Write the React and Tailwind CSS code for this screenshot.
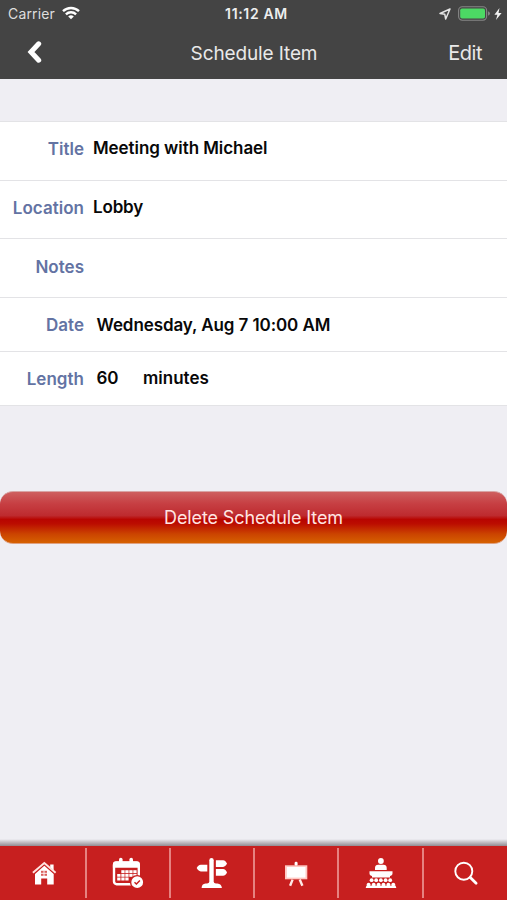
import React from "react";

function HomeIcon() {
  return (
    <svg width="32" height="32" viewBox="0 0 32 32" fill="#fff" className="ml-[2px]">
      <path d="M22.2 7.4h3.4v6.2l-3.4-3z" />
      <path d="M4.9 15.8 16.3 6l11.3 9.8" fill="none" stroke="#ffe3e0" strokeWidth="1.9" />
      <path d="M16.3 8.8 25.7 17v10.4h-6.5v-5.9h-6v5.9H7V17z" />
      <path d="M13 13.8h6v5h-6z" fill="#d9605c" />
      <path d="M16 13.6v5.4M12.8 16.3h6.4" stroke="#fff" strokeWidth="0.9" />
    </svg>
  );
}

function CalendarIcon() {
  const columns = [9.3, 13.3, 17.3, 21.3];
  return (
    <svg width="32" height="32" viewBox="0 0 32 32" fill="#fff">
      <rect x="2" y="5.6" width="24.8" height="21.6" rx="2.6" fill="none" stroke="#fff" strokeWidth="2.4" />
      <path d="M.9 10.8V7.3a3 3 0 0 1 3-3h21a3 3 0 0 1 3 3v3.5z" />
      <rect x="7" y=".7" width="3.6" height="5.5" rx="1.8" />
      <rect x="17.4" y=".7" width="3.6" height="5.5" rx="1.8" />
      {columns.map((x) => (
        <g key={x}>
          <rect x={x} y="13.2" width="3.3" height="2.9" />
          <rect x={x} y="16.9" width="3.3" height="2.9" />
        </g>
      ))}
      <path d="M5.2 16.9h3.3v2.9H5.2zM5.2 20.6h3.3v2.9H5.2zM9.3 20.6h3.3v2.9H9.3zM13.3 20.6h3.3v2.9h-3.3z" />
      <circle cx="25.2" cy="25.2" r="6.6" stroke="#c71f1f" strokeWidth="1.4" />
      <path d="m22.5 25.2 1.9 1.8 3.5-3.6" fill="none" stroke="#c71f1f" strokeWidth="1.4" />
    </svg>
  );
}

function SignpostIcon() {
  return (
    <svg width="32" height="32" viewBox="0 0 32 32" fill="#fff">
      <path d="M13.3 26V3.2a2.2 2.2 0 0 1 4.4 0V26z" />
      <path d="M5.6 31c.1-2.6 1.3-4.1 4-4.4 1.9-.2 3.3-.6 3.7-1.7h4.4c.4 1.1 1.8 1.5 3.7 1.7 2.7.3 4.3 1.8 4.5 4.4z" />
      <path d="M11.3 7.7v6.7H4.8C3 14.4 1.5 12.6.7 11 1.5 9.400 3 7.700 4.800 7.700z" />
      <path d="M19.9 3.2h7.2c1.7 0 3.2 1.8 3.9 3.4-.7 1.6-2.2 3.4-3.9 3.4h-7.2z" />
      <path d="M19.9 12h7.2c1.7 0 3.2 1.8 3.9 3.4-.7 1.6-2.2 3.4-3.9 3.4h-7.2z" />
    </svg>
  );
}

function EaselIcon() {
  return (
    <svg width="32" height="32" viewBox="0 0 32 32" fill="#fff">
      <rect x="14.6" y="4.8" width="3" height="4" rx="1.3" />
      <rect x="5" y="8.3" width="22.3" height="14" fill="#ffc9c4" />
      <rect x="6.8" y="10" width="18.7" height="10.6" />
      <path d="m12.6 22.6-2.5 6.2M19.7 22.6l2.7 6.2" stroke="#ffe9e6" strokeWidth="2.4" />
    </svg>
  );
}

function CakeIcon() {
  const scallops = [3.6, 8.7, 13.6, 18.5, 23.4, 28.3];
  const beads = [6.6, 11.2, 15.9, 20.6, 25.2];
  return (
    <svg width="32" height="32" viewBox="0 0 32 32" fill="#fff">
      <circle cx="15.9" cy="4" r="2.9" />
      <path d="M10 13v-2.1c0-2 1.3-3.2 3.2-3.2h5.3c1.9 0 3.2 1.2 3.2 3.2V13z" />
      <path d="M4.5 14.3h23v2.2c0 1.6-1.3 2.5-2.5 2.5v1.5H7V19c-1.2 0-2.5-.9-2.5-2.5z" />
      {beads.map((x) => (
        <circle key={x} cx={x} cy="23.2" r="1.9" />
      ))}
      {scallops.map((x) => (
        <circle key={x} cx={x} cy="27.6" r="1.9" />
      ))}
      <path d="M1.5 28.5h29l.8 2.500H.7z" />
    </svg>
  );
}

function SearchIcon() {
  return (
    <svg width="32" height="32" viewBox="0 0 32 32" fill="none" stroke="#fff">
      <circle cx="13.8" cy="14.2" r="8.5" strokeWidth="1.9" />
      <path d="m20.3 20.5 5.800 5.800" strokeWidth="2.8" strokeLinecap="round" />
    </svg>
  );
}

function StatusBar() {
  return (
    <div className="grid h-[27px] grid-cols-3 items-center pt-[1px] leading-none text-[#eeeeee]">
      <div className="flex items-center gap-[7px] pl-2">
        <span className="w-[47px] whitespace-nowrap text-[14px] tracking-[0.16px] text-[#dedede]">Carrier</span>
        <svg width="18" height="14" viewBox="0 0 18 14" className="-mt-[2px]" fill="none" stroke="#fff" strokeWidth="2.4">
          <path d="M1 5.2a11.6 11.6 0 0 1 16 0M3.9 8.3a7.4 7.4 0 0 1 10.2 0" />
          <path d="M9 13.3 6.2 10.5a4 4 0 0 1 5.6 0z" fill="#fff" stroke="none" />
        </svg>
      </div>
      <span className="whitespace-nowrap pb-[1px] pl-[6px] text-center text-[14px] font-semibold tracking-[0.65px]">11:12 AM</span>
      <div className="flex items-center justify-end pr-[5px]">
        <svg width="12" height="12" viewBox="0 0 12 12" className="mr-[7px]" fill="none" stroke="#e4e4e4" strokeWidth="1.5" strokeLinejoin="round">
          <path d="M11 1 1 5.5l4.8.8.9 4.7z" />
        </svg>
        <svg width="33" height="15" viewBox="0 0 33 15" className="-mt-[2px] mr-[3px]">
          <rect x=".6" y=".8" width="28" height="13.4" rx="3.6" fill="none" stroke="#858585" strokeWidth="1.1" />
          <rect x="2.2" y="2.4" width="24.8" height="10.2" rx="1.8" fill="#4cd964" />
          <path d="M30 5.2q2 .7 2 2.3t-2 2.3z" fill="#858585" />
        </svg>
        <svg width="8" height="12" viewBox="0 0 8 12" className="-mt-[1px]" fill="#f2f2f2">
          <path d="M5.5 0 .4 6.8h3L2 12l5.6-7H4.5z" />
        </svg>
      </div>
    </div>
  );
}

function Row({ label, height, children, gap }) {
  return (
    <div className={"flex items-center border-b border-[#e3e3e6] text-[17px] leading-none " + height}>
      <span className="w-[84px] shrink-0 whitespace-nowrap pt-[1px] text-right font-semibold tracking-[0.02px] text-[#6373a3]">{label}</span>
      <div className={"flex whitespace-nowrap font-semibold text-[#080808] " + gap}>{children}</div>
    </div>
  );
}

const tabs = [
  { name: "Home", Icon: HomeIcon },
  { name: "Schedule", Icon: CalendarIcon },
  { name: "Directions", Icon: SignpostIcon },
  { name: "Presentations", Icon: EaselIcon },
  { name: "Exhibits", Icon: CakeIcon },
  { name: "Search", Icon: SearchIcon },
];

export default function App() {
  return (
    <div className="flex h-[900px] w-[507px] flex-col overflow-hidden bg-[#efeef3] font-['Inter','Liberation_Sans',sans-serif]">
      <header className="h-[79px] shrink-0 bg-[#444444]">
        <StatusBar />
        <div className="grid h-[52px] grid-cols-[100px_1fr_100px] items-center text-[#e9e9e9]">
          <button className="pl-[26px]" aria-label="Back">
            <svg width="16" height="24" viewBox="0 0 16 24" className="-mt-[2px]" fill="none" stroke="#fff" strokeWidth="5">
              <path d="M12.7 3.8 5 12l7.7 8.2" strokeLinecap="round" strokeLinejoin="miter" />
            </svg>
          </button>
          <h1 className="whitespace-nowrap pl-[1px] text-center text-[19px] leading-none tracking-[-0.12px]">Schedule Item</h1>
          <button className="pr-[25px] text-right text-[20px] leading-none tracking-[-0.45px]">Edit</button>
        </div>
      </header>

      <main className="flex-1">
        <section className="mt-[42px] border-t border-[#e3e3e6] bg-white">
          <Row label="Title" height="h-[59px] pb-[5px]" gap="pl-[9px]"><span className="tracking-[-0.06px]">Meeting with Michael</span></Row>
          <Row label="Location" height="h-[58px] pb-[4px]" gap="pl-[9px]"><span className="tracking-[-0.15px]">Lobby</span></Row>
          <Row label="Notes" height="h-[59px] pb-[3px]" gap="pl-[9px]" />
          <Row label="Date" height="h-[54px] pt-[1px]" gap="pl-[12.5px]"><span className="tracking-[-0.09px]">Wednesday, Aug 7 10:00 AM</span></Row>
          <Row label="Length" height="h-[54px]" gap="pl-[12.5px]">
            <span className="w-[46.5px]">60</span>
            <span>minutes</span>
          </Row>
        </section>
        <button className="mt-[85px] flex h-[53px] w-full items-center justify-center rounded-[13px] border-y border-t-[#d8a5a5] border-b-[#dfa080] bg-[linear-gradient(to_bottom,#ce6060_0%,#c74044_22%,#be2b2f_46%,#b80500_54%,#bb0c00_62%,#cb4300_82%,#d66100_100%)] pt-[1px] text-[18px] leading-none tracking-[-0.12px] text-[#ffe5e2]">
          Delete Schedule Item
        </button>
      </main>

      <div className="h-[7px] shrink-0 bg-gradient-to-b from-[#efeef3] to-[#938c92]" />
      <nav className="grid h-[54px] shrink-0 grid-cols-[87px_84px_84px_84px_85px_83px] bg-[#c71f1f]">
        {tabs.map(({ name, Icon }, index) => (
          <button key={name} aria-label={name} className="flex items-center">
            <span className="flex flex-1 justify-center">
              <Icon />
            </span>
            {index < tabs.length - 1 && <span className="h-[50px] w-[2px] shrink-0 bg-[#e68280]" />}
          </button>
        ))}
      </nav>
    </div>
  );
}
